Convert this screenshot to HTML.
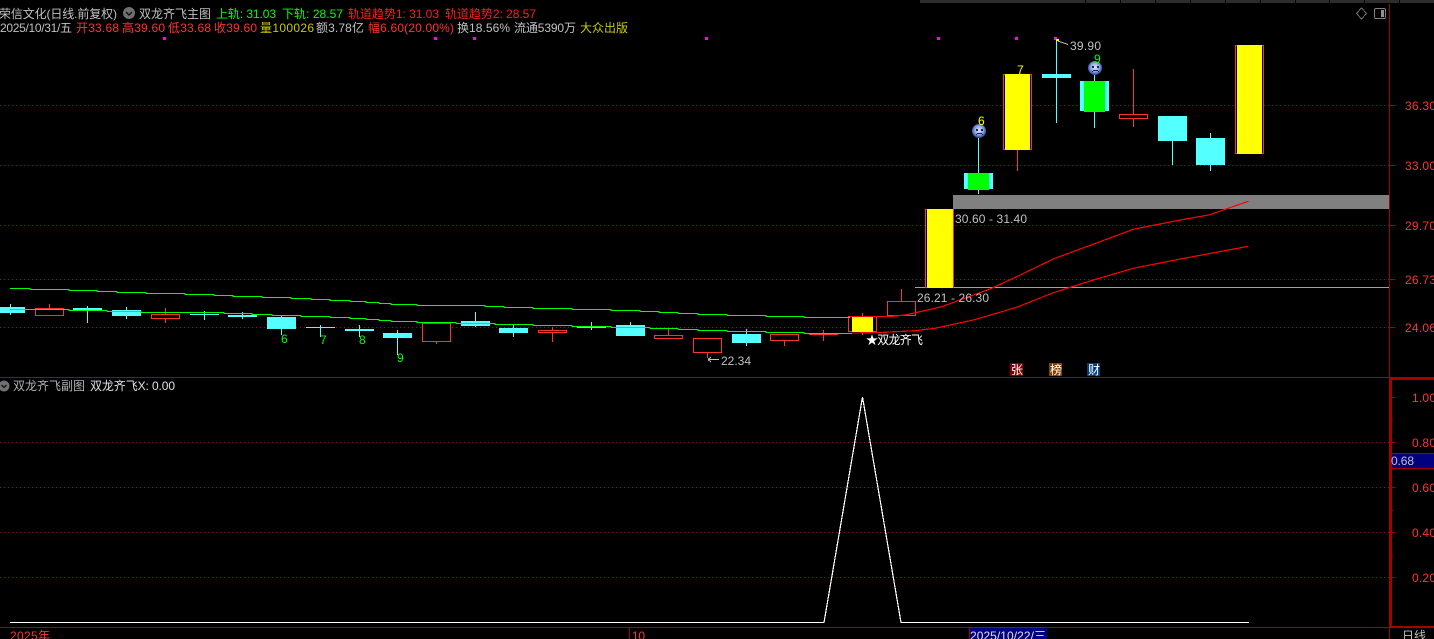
<!DOCTYPE html>
<html>
<head>
<meta charset="utf-8">
<style>
html,body{margin:0;padding:0;background:#000;width:1434px;height:639px;overflow:hidden}
svg{display:block;position:absolute;left:0;top:0}
text{font-family:"Liberation Sans","WenQuanYi Zen Hei","Noto Sans CJK SC",sans-serif;font-size:12px;fill:#c0c0c0;white-space:pre}
.s{shape-rendering:crispEdges}
.ax line,.ax path{stroke:#a80000;fill:none}
.dot line{stroke:#b80000;stroke-dasharray:1 3;fill:none}
.cy rect{fill:#54ffff}
.cy line{stroke:#54ffff}
.rd rect{fill:#000;stroke:#ff3232}
.rd line{stroke:#ff3232}
.lb text{fill:#ff3232}
</style>
</head>
<body>
<svg width="1434" height="639" viewBox="0 0 1434 639" xmlns="http://www.w3.org/2000/svg">
<defs>
<radialGradient id="f" cx="50%" cy="45%" r="55%"><stop offset="0" stop-color="#e0e8ff"/><stop offset=".55" stop-color="#8ea8e8"/><stop offset="1" stop-color="#24408c"/></radialGradient>
</defs>
<rect width="1434" height="639" fill="#000"/>

<g class="s">
<rect x="920" y="0" width="514" height="3" fill="#2c2c2c"/>
<rect x="1085" y="0" width="1" height="3" fill="#000"/><rect x="1120" y="0" width="1" height="3" fill="#000"/><rect x="1155" y="0" width="1" height="3" fill="#000"/><rect x="1190" y="0" width="1" height="3" fill="#000"/><rect x="1225" y="0" width="1" height="3" fill="#000"/><rect x="1260" y="0" width="1" height="3" fill="#000"/><rect x="1295" y="0" width="1" height="3" fill="#000"/><rect x="1329" y="0" width="1" height="3" fill="#000"/><rect x="1364" y="0" width="1" height="3" fill="#000"/><rect x="1399" y="0" width="1" height="3" fill="#000"/>
</g>

<g class="s dot">
<line x1="0" y1="105.5" x2="1389" y2="105.5"/>
<line x1="0" y1="165.5" x2="1389" y2="165.5"/>
<line x1="0" y1="225.5" x2="1389" y2="225.5"/>
<line x1="0" y1="279.5" x2="1389" y2="279.5"/>
<line x1="0" y1="327.5" x2="1389" y2="327.5"/>
<line x1="0" y1="442.5" x2="1389" y2="442.5"/>
<line x1="0" y1="487.5" x2="1389" y2="487.5"/>
<line x1="0" y1="532.5" x2="1389" y2="532.5"/>
<line x1="0" y1="577.5" x2="1389" y2="577.5"/>
</g>

<!-- magenta dots -->
<g class="s" fill="#ff00ff">
<rect x="163" y="37" width="3" height="3"/><rect x="434" y="37" width="3" height="3"/><rect x="473" y="37" width="3" height="3"/><rect x="705" y="37" width="3" height="3"/><rect x="937" y="37" width="3" height="3"/><rect x="1015" y="37" width="3" height="3"/><rect x="1054" y="37" width="3" height="3"/>
</g>

<!-- gray bands -->
<g class="s">
<rect x="953" y="195" width="436" height="14" fill="#808080"/>
<rect x="915" y="287" width="474" height="1" fill="#a0a0a0"/>
</g>

<!-- cyan candles -->
<g class="s cy">
<line x1="10.5" y1="304" x2="10.5" y2="315"/><rect x="0" y="307" width="25" height="6"/>
<line x1="87.5" y1="306" x2="87.5" y2="323"/><rect x="73" y="308" width="29" height="3"/>
<line x1="126.5" y1="307" x2="126.5" y2="319"/><rect x="112" y="310" width="29" height="6"/>
<line x1="204.5" y1="311" x2="204.5" y2="320"/><rect x="190" y="314" width="29" height="1"/>
<line x1="242.5" y1="312" x2="242.5" y2="319"/><rect x="228" y="315" width="29" height="2"/>
<line x1="281.5" y1="316" x2="281.5" y2="335"/><rect x="267" y="317" width="29" height="12"/>
<line x1="320.5" y1="325" x2="320.5" y2="337"/><rect x="306" y="327" width="29" height="1"/>
<line x1="359.5" y1="325" x2="359.5" y2="337"/><rect x="345" y="329" width="29" height="2"/>
<line x1="397.5" y1="330" x2="397.5" y2="355"/><rect x="383" y="333" width="29" height="5"/>
<line x1="475.5" y1="312" x2="475.5" y2="327"/><rect x="461" y="321" width="29" height="5"/>
<line x1="513.5" y1="324" x2="513.5" y2="337"/><rect x="499" y="328" width="29" height="5"/>
<line x1="591.5" y1="322" x2="591.5" y2="330"/><rect x="577" y="326" width="29" height="2"/>
<line x1="630.5" y1="322" x2="630.5" y2="336"/><rect x="616" y="325" width="29" height="11"/>
<line x1="746.5" y1="329" x2="746.5" y2="346"/><rect x="732" y="334" width="29" height="9"/>
<line x1="978.5" y1="138" x2="978.5" y2="194"/><rect x="964" y="173" width="29" height="16"/>
<line x1="1056.5" y1="39" x2="1056.5" y2="123"/><rect x="1042" y="74" width="29" height="4"/>
<line x1="1094.5" y1="75" x2="1094.5" y2="128"/><rect x="1080" y="81" width="29" height="30"/>
<line x1="1172.5" y1="141" x2="1172.5" y2="165"/><rect x="1158" y="116" width="29" height="25"/>
<line x1="1210.5" y1="133" x2="1210.5" y2="171"/><rect x="1196" y="138" width="29" height="27"/>
</g>

<!-- red candles -->
<g class="s rd">
<line x1="49.5" y1="304" x2="49.5" y2="309"/><rect x="35.5" y="308.5" width="28" height="7"/>
<line x1="165.5" y1="308" x2="165.5" y2="323"/><rect x="151.5" y="314.5" width="28" height="4"/>
<line x1="436.5" y1="342" x2="436.5" y2="344"/><rect x="422.5" y="323.5" width="28" height="18"/>
<line x1="552.5" y1="327" x2="552.5" y2="342"/><rect x="538.5" y="330.5" width="28" height="2"/>
<line x1="668.5" y1="328" x2="668.5" y2="335"/><rect x="654.5" y="335.5" width="28" height="3"/>
<line x1="707.5" y1="353" x2="707.5" y2="358"/><rect x="693.5" y="338.5" width="28" height="14"/>
<line x1="784.5" y1="341" x2="784.5" y2="346"/><rect x="770.5" y="334.5" width="28" height="6"/>
<line x1="823.5" y1="330" x2="823.5" y2="341"/><line x1="809" y1="334.5" x2="838" y2="334.5"/>
<line x1="862.5" y1="313" x2="862.5" y2="335"/><rect x="848.5" y="316.5" width="28" height="15"/>
<line x1="901.5" y1="289" x2="901.5" y2="301"/><rect x="887.5" y="301.5" width="28" height="14"/>
<rect x="925.5" y="209.5" width="28" height="78"/>
<line x1="1017.5" y1="150" x2="1017.5" y2="171"/><rect x="1003.5" y="74.5" width="28" height="75"/>
<line x1="1133.5" y1="69" x2="1133.5" y2="127"/><rect x="1119.5" y="114.5" width="28" height="4"/>
<rect x="1235.5" y="45.5" width="28" height="108"/>
</g>

<!-- fills -->
<g class="s">
<rect x="852" y="316" width="21" height="16" fill="#ffff00"/>
<rect x="927" y="209" width="26" height="79" fill="#ffff00"/>
<rect x="1005" y="74" width="25" height="76" fill="#ffff00"/>
<rect x="1237" y="45" width="25" height="109" fill="#ffff00"/>
<rect x="968" y="173" width="21" height="17" fill="#00ff00"/>
<rect x="1084" y="81" width="21" height="31" fill="#00ff00"/>
</g>

<!-- green MA lines -->
<g class="s" fill="none" stroke="#00ff00">
<path d="M10 288.5H30V289.5H69V290.5H97V291.5H117V292.5H146V293.5H185V294.5H214V295.5H233V296.5H262V297.5H291V298.5H311V299.5H330V300.5H350V301.5H366V302.5H379V303.5H391V304.5H417V305.5H485V306.5H504V307.5H533V308.5H572V309.5H611V310.5H640V311.5H659V312.5H678V313.5H698V314.5H727V315.5H766V316.5H804V317.5H850"/>
<path d="M10 309.5H69V310.5H107V311.5H141V312.5H224V313.5H252V314.5H272V315.5H301V316.5H330V317.5H350V318.5H366V319.5H379V320.5H391V321.5H417V322.5H456V323.5H495V324.5H533V325.5H572V326.5H611V327.5H650V328.5H678V329.5H698V330.5H727V331.5H766V332.5H804V333.5H852"/>
</g>

<!-- red MA lines -->
<g class="s" fill="none" stroke="#ff0000" stroke-width="1.2">
<polyline points="850,316.5 891,316.5 905,315 920,311.7 941.7,306.7 991.7,288.3 1016.7,276.7 1053.3,259 1100,241.7 1133.3,229.3 1176.7,220.7 1210,214.7 1248.3,201.3"/>
<polyline points="852,333 880,332.5 915,330.7 935,328.3 973.3,320 1016.7,307.3 1053.3,292.7 1093.3,280 1133.3,268.3 1176.7,259.7 1248.3,246.3"/>
</g>

<!-- faces -->
<g>
<circle cx="979" cy="131" r="7" fill="url(#f)"/>
<g class="s" fill="#1c2440"><rect x="976" y="129" width="2" height="2"/><rect x="981" y="129" width="2" height="2"/><rect x="977" y="133" width="5" height="1"/><rect x="976" y="134" width="1" height="1"/><rect x="982" y="134" width="1" height="1"/></g>
<circle cx="1095" cy="68" r="7" fill="url(#f)"/>
<g class="s" fill="#1c2440"><rect x="1092" y="66" width="2" height="2"/><rect x="1097" y="66" width="2" height="2"/><rect x="1093" y="70" width="5" height="1"/><rect x="1092" y="71" width="1" height="1"/><rect x="1098" y="71" width="1" height="1"/></g>
</g>

<!-- annotations -->
<text x="978" y="125" style="fill:#ffff00">6</text>
<text x="1017" y="74" style="fill:#ffff00">7</text>
<text x="1094" y="63" style="fill:#00ff00">9</text>
<text x="281" y="343" style="fill:#00ff00">6</text>
<text x="320" y="344" style="fill:#00ff00">7</text>
<text x="359" y="344" style="fill:#00ff00">8</text>
<text x="397" y="362" style="fill:#00ff00">9</text>

<g class="s" fill="none" stroke="#c0c0c0">
<path d="M708 359.5H719M708 359.5L711 357M708 359.5L711 362"/>
<path d="M1058 41L1068 44.5"/>
</g>
<rect class="s" x="1056" y="39" width="3" height="2" fill="#ffff00"/>
<text x="721" y="365" textLength="30">22.34</text>
<text x="1070" y="50" textLength="31">39.90</text>
<text x="955" y="223" textLength="72">30.60 - 31.40</text>
<text x="917" y="302" textLength="72">26.21 - 26.30</text>
<text x="866" y="344" textLength="57" style="fill:#fff">★双龙齐飞</text>

<!-- tag boxes -->
<g class="s">
<rect x="1010" y="363" width="13" height="13" fill="#800000"/>
<rect x="1049" y="363" width="13" height="13" fill="#804000"/>
<rect x="1087" y="363" width="13" height="13" fill="#004080"/>
</g>
<text x="1011" y="374" style="fill:#fff">张</text>
<text x="1050" y="374" style="fill:#fff">榜</text>
<text x="1088" y="374" style="fill:#fff">财</text>

<!-- white sub chart line -->
<polyline class="s" points="10,622.5 824,622.5 862.5,397 901,622.5 1249,622.5" fill="none" stroke="#fff" stroke-width="1.2"/>

<!-- axes and frames -->
<g class="s ax">
<line x1="0" y1="377.5" x2="1434" y2="377.5"/>
<line x1="0" y1="627.5" x2="1434" y2="627.5"/>
<line x1="1389.5" y1="4" x2="1389.5" y2="639"/>
<line x1="1389" y1="105.5" x2="1395" y2="105.5"/>
<line x1="1389" y1="165.5" x2="1395" y2="165.5"/>
<line x1="1389" y1="225.5" x2="1395" y2="225.5"/>
<line x1="1389" y1="279.5" x2="1395" y2="279.5"/>
<line x1="1389" y1="327.5" x2="1395" y2="327.5"/>
<line x1="1392" y1="397.5" x2="1395" y2="397.5"/>
<line x1="1392" y1="420.5" x2="1393" y2="420.5"/>
<line x1="1392" y1="442.5" x2="1395" y2="442.5"/>
<line x1="1392" y1="487.5" x2="1395" y2="487.5"/>
<line x1="1392" y1="510.5" x2="1393" y2="510.5"/>
<line x1="1392" y1="532.5" x2="1395" y2="532.5"/>
<line x1="1392" y1="555.5" x2="1393" y2="555.5"/>
<line x1="1392" y1="577.5" x2="1395" y2="577.5"/>
<line x1="629.5" y1="628" x2="629.5" y2="639"/>
</g>
<g class="s" fill="#a80000">
<rect x="1390" y="378" width="44" height="2"/>
<rect x="1390" y="378" width="2" height="250"/>
<rect x="1390" y="626" width="44" height="2"/>
</g>

<!-- 0.68 -->
<rect class="s" x="1391.5" y="453.5" width="44" height="15" fill="#000080" stroke="#a80000"/>
<text x="1391" y="465" textLength="23">0.68</text>

<!-- axis labels -->
<g class="lb">
<text x="1405" y="110" textLength="31">36.30</text>
<text x="1405" y="170" textLength="31">33.00</text>
<text x="1405" y="230" textLength="31">29.70</text>
<text x="1405" y="284" textLength="31">26.73</text>
<text x="1405" y="332" textLength="31">24.06</text>
<text x="1412" y="402" textLength="24">1.00</text>
<text x="1412" y="447" textLength="24">0.80</text>
<text x="1412" y="492" textLength="24">0.60</text>
<text x="1412" y="537" textLength="24">0.40</text>
<text x="1412" y="582" textLength="24">0.20</text>
</g>

<!-- header -->
<text x="-1" y="18" textLength="118">荣信文化(日线.前复权)</text>
<circle cx="129" cy="13" r="6" fill="#707070"/>
<path d="M126 12L129 15L132 12" fill="none" stroke="#111" stroke-width="1.4"/>
<text x="139" y="18" textLength="72">双龙齐飞主图</text>
<text x="216" y="18" textLength="60" style="fill:#00ff00">上轨: 31.03</text>
<text x="282" y="18" textLength="61" style="fill:#00ff00">下轨: 28.57</text>
<text x="348" y="18" textLength="91" style="fill:#ff1c1c">轨道趋势1: 31.03</text>
<text x="445" y="18" textLength="91" style="fill:#ff1c1c">轨道趋势2: 28.57</text>

<text x="0" y="32" textLength="72">2025/10/31/五</text>
<text x="76" y="32" textLength="43" style="fill:#ff3232">开33.68</text>
<text x="122" y="32" textLength="43" style="fill:#ff3232">高39.60</text>
<text x="168" y="32" textLength="43" style="fill:#ff3232">低33.68</text>
<text x="214" y="32" textLength="43" style="fill:#ff3232">收39.60</text>
<text x="260" y="32" textLength="54" style="fill:#c8c800">量100026</text>
<text x="316" y="32" textLength="48">额3.78亿</text>
<text x="368" y="32" textLength="86" style="fill:#ff3232">幅6.60(20.00%)</text>
<text x="457" y="32" textLength="53">换18.56%</text>
<text x="514" y="32" textLength="62">流通5390万</text>
<text x="580" y="32" textLength="48" style="fill:#c8c800">大众出版</text>

<!-- top right icons -->
<path class="s" d="M1361.5 8L1366.5 13.5L1361.5 19L1356.5 13.5Z" fill="none" stroke="#707070"/>
<rect x="1374.5" y="8.5" width="11" height="10" rx="1.5" fill="none" stroke="#808080" stroke-width="1"/>
<rect class="s" x="1381" y="10" width="3" height="7" fill="#909090"/>

<!-- sub panel title -->
<circle cx="4" cy="386" r="5.5" fill="#707070"/>
<path d="M1.5 385L4 387.5L6.5 385" fill="none" stroke="#111" stroke-width="1.3"/>
<text x="13" y="390" textLength="72" style="fill:#b0b0b0">双龙齐飞副图</text>
<text x="90" y="390" textLength="85" style="fill:#e0e0e0">双龙齐飞X: 0.00</text>

<!-- bottom axis -->
<rect class="s" x="969" y="628" width="78" height="11" fill="#000080"/>
<rect class="s" x="969" y="628" width="1" height="11" fill="#a80000"/>
<text x="10" y="640" textLength="40" style="fill:#ff3232">2025年</text>
<text x="632" y="640" textLength="13" style="fill:#ff3232">10</text>
<text x="970" y="640" textLength="76" style="fill:#e0e0e0">2025/10/22/三</text>
<text x="1402" y="640" textLength="24">日线</text>
</svg>
</body>
</html>
